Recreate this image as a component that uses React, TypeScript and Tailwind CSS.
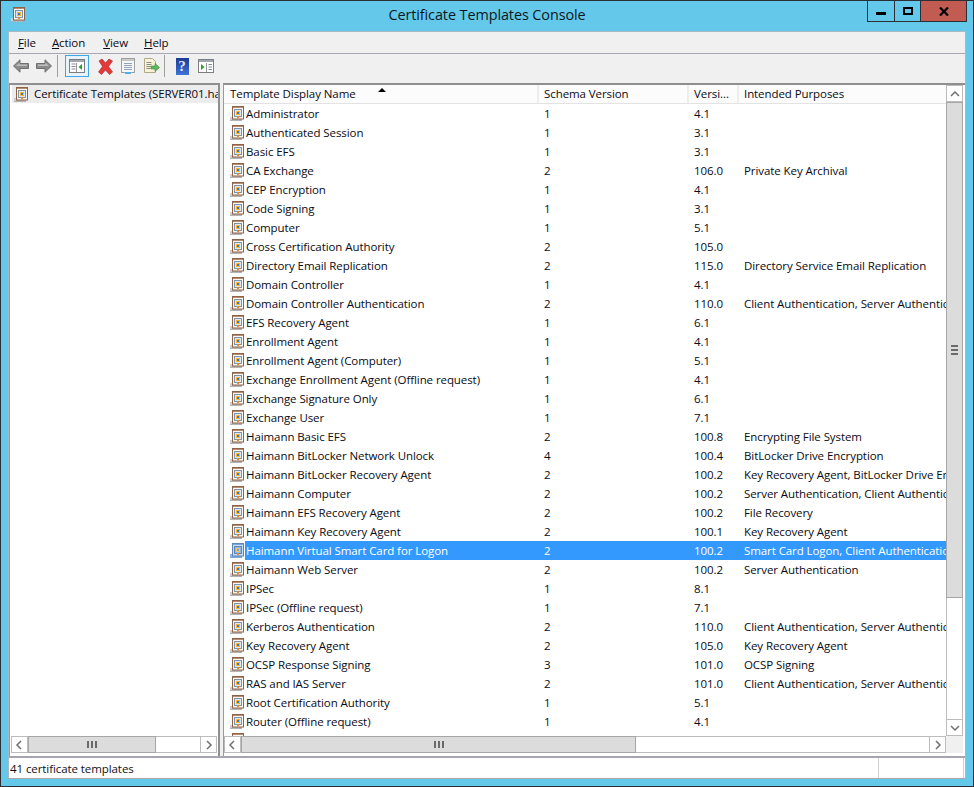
import React from "react";

const rows: [string, string, string, string][] = [
  ["Administrator", "1", "4.1", ""],
  ["Authenticated Session", "1", "3.1", ""],
  ["Basic EFS", "1", "3.1", ""],
  ["CA Exchange", "2", "106.0", "Private Key Archival"],
  ["CEP Encryption", "1", "4.1", ""],
  ["Code Signing", "1", "3.1", ""],
  ["Computer", "1", "5.1", ""],
  ["Cross Certification Authority", "2", "105.0", ""],
  ["Directory Email Replication", "2", "115.0", "Directory Service Email Replication"],
  ["Domain Controller", "1", "4.1", ""],
  ["Domain Controller Authentication", "2", "110.0", "Client Authentication, Server Authentication, Smart Card Logon"],
  ["EFS Recovery Agent", "1", "6.1", ""],
  ["Enrollment Agent", "1", "4.1", ""],
  ["Enrollment Agent (Computer)", "1", "5.1", ""],
  ["Exchange Enrollment Agent (Offline request)", "1", "4.1", ""],
  ["Exchange Signature Only", "1", "6.1", ""],
  ["Exchange User", "1", "7.1", ""],
  ["Haimann Basic EFS", "2", "100.8", "Encrypting File System"],
  ["Haimann BitLocker Network Unlock", "4", "100.4", "BitLocker Drive Encryption"],
  ["Haimann BitLocker Recovery Agent", "2", "100.2", "Key Recovery Agent, BitLocker Drive Encryption"],
  ["Haimann Computer", "2", "100.2", "Server Authentication, Client Authentication"],
  ["Haimann EFS Recovery Agent", "2", "100.2", "File Recovery"],
  ["Haimann Key Recovery Agent", "2", "100.1", "Key Recovery Agent"],
  ["Haimann Virtual Smart Card for Logon", "2", "100.2", "Smart Card Logon, Client Authentication"],
  ["Haimann Web Server", "2", "100.2", "Server Authentication"],
  ["IPSec", "1", "8.1", ""],
  ["IPSec (Offline request)", "1", "7.1", ""],
  ["Kerberos Authentication", "2", "110.0", "Client Authentication, Server Authentication"],
  ["Key Recovery Agent", "2", "105.0", "Key Recovery Agent"],
  ["OCSP Response Signing", "3", "101.0", "OCSP Signing"],
  ["RAS and IAS Server", "2", "101.0", "Client Authentication, Server Authentication"],
  ["Root Certification Authority", "1", "5.1", ""],
  ["Router (Offline request)", "1", "4.1", ""],
  ["Smartcard Logon", "1", "6.1", ""],
];

function CertIcon({ selected = false }: { selected?: boolean }) {
  const frame = selected ? "#5f86b8" : "#8f6248";
  const inner = selected ? "#c9def5" : "#fbfaf6";
  return (
    <svg width="15" height="15" viewBox="0 0 15 15" className="shrink-0">
      <path d="M0 13h12v2H0z" fill={selected ? "#7aa7dc" : "#b4b4b4"} />
      <path d="M0 11h2v3H0z" fill={selected ? "#8fb6e6" : "#cfcfcf"} />
      <rect x="2.5" y="0.5" width="11" height="12.5" fill={inner} stroke={frame} />
      <path d="M3 1h10v1H3z" fill={selected ? "#7aa7dc" : "#b88e72"} />
      <rect x="4.5" y="3.5" width="7" height="7" fill={selected ? "#8cb8ec" : "#dfe7f2"} stroke={selected ? "#5f86b8" : "#7f93ad"} />
      <rect x="6" y="5" width="4" height="4" fill={selected ? "#f2c46a" : "#f6b52e"} />
      <rect x="7" y="6" width="2" height="2" fill={selected ? "#7aa7dc" : "#3f78c8"} />
      <path d="M7 10h2v2.500l-1-0.700-1 0.700z" fill="#e0892a" />
    </svg>
  );
}

function Arrow({ dir, color = "#6f6f6f" }: { dir: "l" | "r" | "u" | "d"; color?: string }) {
  const d = { l: "M7 2 3 6l4 4", r: "M4 2l4 4-4 4", u: "M2 8l4-4 4 4", d: "M2 4l4 4 4-4" }[dir];
  return (
    <svg width="12" height="12" viewBox="0 0 12 12">
      <path d={d} fill="none" stroke={color} strokeWidth="1.5" />
    </svg>
  );
}

function ScrollBtn({ dir }: { dir: "l" | "r" | "u" | "d" }) {
  return (
    <div className="flex h-[17px] w-[17px] shrink-0 items-center justify-center border border-[#bcbcbc] bg-white">
      <Arrow dir={dir} />
    </div>
  );
}

function HBar({ thumb }: { thumb: string }) {
  return (
    <div className="flex h-[17px] w-full min-w-0">
      <ScrollBtn dir="l" />
      <div className="flex min-w-0 flex-1">
        <div className={`${thumb} flex shrink-0 items-center justify-center border border-[#a6a6a6] bg-[#dcdcdc]`}>
          <div className="flex gap-[2px]">
            <div className="h-[7px] w-[2px] bg-[#6b6b6b]" />
            <div className="h-[7px] w-[2px] bg-[#6b6b6b]" />
            <div className="h-[7px] w-[2px] bg-[#6b6b6b]" />
          </div>
        </div>
        <div className="flex-1 border-y border-[#bcbcbc] bg-white" />
      </div>
      <ScrollBtn dir="r" />
    </div>
  );
}

function ArrowBtn({ flip }: { flip?: boolean }) {
  return (
    <svg width="16" height="14" viewBox="0 0 16 14" className={flip ? "-scale-x-100" : ""}>
      <path d="M0.5 7 7 0.8v3.700h8.500v5H7v3.700z" fill="#8c8c8c" stroke="#6f6f6f" />
      <path d="M3 7l3.500-3.200V5.500H14V7z" fill="#bdbdbd" />
    </svg>
  );
}

function Toolbar() {
  return (
    <div className="flex h-[29px] items-start bg-[#f0f0f0] pl-[4px] pt-[1px]">
      <div className="flex h-[22px] w-[39px] items-center justify-between">
        <ArrowBtn />
        <ArrowBtn flip />
      </div>
      <div className="ml-[5px] h-[22px] w-px bg-[#a0a0a0]" />
      <div className="ml-[7px] flex h-[22px] w-[24px] items-center justify-center border border-[#3ea8e6] bg-[#e6f3fb]">
        <svg width="16" height="14" viewBox="0 0 16 14">
          <rect x="0.5" y="0.5" width="15" height="13" fill="#fff" stroke="#7d7d7d" />
          <rect x="1" y="1" width="14" height="2" fill="#9fa8b0" />
          <path d="M2.5 5h4M2.5 7.5h4M2.5 10h4" stroke="#7d8a96" />
          <path d="M7.5 4v9" stroke="#9a9a9a" />
          <path d="M13 5v6L9.5 8z" fill="#2ca02c" />
        </svg>
      </div>
      <div className="ml-[6px] flex h-[22px] w-[20px] items-center justify-center">
        <svg width="17" height="17" viewBox="0 0 17 17">
          <path d="M2 3 5 1l3.500 4L12 1l3.500 2-4 5.500 4 5.500-3 2.500-4-4.500-4 4.500-3-2.500 4-5.500z" fill="#e23a3a" stroke="#b02020" strokeWidth="0.6" />
        </svg>
      </div>
      <div className="ml-[3px] flex h-[22px] w-[20px] items-center justify-center">
        <svg width="16" height="16" viewBox="0 0 16 16">
          <rect x="1.500" y="0.500" width="13" height="14" fill="#f6f6f6" stroke="#a0a0a0" />
          <rect x="2" y="1" width="12" height="2" fill="#c8c8c8" />
          <path d="M4 5.500h8M4 7.500h8M4 9.500h8M4 11.500h8" stroke="#8fa3bd" />
          <rect x="5" y="14" width="6" height="2" fill="#4fb0e8" />
        </svg>
      </div>
      <div className="ml-[3px] flex h-[22px] w-[20px] items-center justify-center">
        <svg width="17" height="16" viewBox="0 0 17 16">
          <path d="M1.500 0.500h8l3 3v11h-11z" fill="#f8f2d8" stroke="#b0a888" />
          <path d="M3.500 4.500h5M3.500 6.500h5M3.500 8.500h4M3.500 10.500h4" stroke="#8a8a7a" />
          <path d="M8 8h4V5.500l4.500 4-4.500 4V11H8z" fill="#5cb85c" stroke="#3c8c3c" strokeWidth="0.6" />
        </svg>
      </div>
      <div className="ml-[3px] h-[22px] w-px bg-[#a0a0a0]" />
      <div className="ml-[10px] flex h-[22px] w-[14px] items-center justify-center">
        <div
          className="flex h-[17px] w-[13px] items-center justify-center bg-linear-to-b from-[#1d3a94] to-[#3f74d8] text-[15px] font-bold leading-none text-[#e8e8ff]"
          style={{ fontFamily: "'Liberation Serif', serif" }}
        >
          ?
        </div>
      </div>
      <div className="ml-[9px] flex h-[22px] w-[16px] items-center justify-center">
        <svg width="16" height="14" viewBox="0 0 16 14">
          <rect x="0.500" y="0.500" width="15" height="13" fill="#fff" stroke="#7d7d7d" />
          <rect x="1" y="1" width="14" height="2" fill="#9fa8b0" />
          <path d="M3 5v6l3.500-3z" fill="#2ca02c" />
          <path d="M8.500 4v9" stroke="#9a9a9a" />
          <path d="M10.500 5.500h3.500M10.500 8h3.500M10.500 10.500h3.500" stroke="#7d8a96" />
        </svg>
      </div>
    </div>
  );
}

const col2 = "w-[150px] shrink-0 pl-[5px]";
const col3 = "w-[50px] shrink-0 pl-[5px]";

export default function App() {
  return (
    <div
      className="flex h-[787px] w-[974px] flex-col overflow-hidden border border-[#2b2f33] bg-[#63c8ea] text-[11.5px] leading-none tracking-[-0.08px] text-[#0a0a14]"
      style={{ fontFamily: "'Open Sans', 'Noto Sans', sans-serif" }}
    >
      {/* Title bar */}
      <div className="relative flex h-[30px] shrink-0 items-center justify-center pb-[2px]">
        <div className="absolute left-[10px] top-[6px]">
          <CertIcon />
        </div>
        <span className="text-[14.4px] text-[#10181c]">Certificate Templates Console</span>
        <div className="absolute right-[6px] top-0 flex h-[21px] border-x border-b border-[#2b2f33]">
          <div className="flex w-[27px] items-center justify-center border-r border-[#2b2f33]">
            <div className="mt-[5px] h-[3px] w-[10px] bg-black" />
          </div>
          <div className="flex w-[26px] items-center justify-center border-r border-[#2b2f33]">
            <div className="h-[8px] w-[10px] border-2 border-black" />
          </div>
          <div className="flex w-[45px] items-center justify-center bg-[#c25b51]">
            <svg width="10" height="9" viewBox="0 0 10 9">
              <path d="M1 0.500l8 8M9 0.500l-8 8" stroke="#000" strokeWidth="2.200" />
            </svg>
          </div>
        </div>
      </div>

      {/* Client area */}
      <div className="mx-[7px] flex min-h-0 flex-1 flex-col border-x border-t border-[#a9b9c4] bg-[#f0f0f0]">
        {/* Menu */}
        <div className="flex h-[22px] shrink-0 items-center border-b border-[#a8a8b4] pl-[9px]">
          <span className="mr-[16px]"><u>F</u>ile</span>
          <span className="mr-[18px]"><u>A</u>ction</span>
          <span className="mr-[16px]"><u>V</u>iew</span>
          <span><u>H</u>elp</span>
        </div>
        <Toolbar />

        {/* Panes */}
        <div className="flex h-[673px] shrink-0 items-stretch">
          {/* Tree pane */}
          <div className="flex w-[211px] shrink-0 flex-col border-l border-r-2 border-t-2 border-[#8f8f8f] border-l-[#9a9a9a] bg-white">
            <div className="flex min-h-0 flex-1 flex-col pl-[2px]">
              <div className="flex h-[18px] items-center overflow-hidden whitespace-nowrap bg-[#ececec] pl-[2px]">
                <CertIcon />
                <span className="ml-[5px]">Certificate Templates (SERVER01.haimann.local)</span>
              </div>
            </div>
            <div className="mb-[3px] px-[1px]">
              <HBar thumb="w-[128px]" />
            </div>
          </div>
          <div className="w-[3px] shrink-0" />
          {/* List pane */}
          <div className="flex min-w-0 flex-1 border-l border-t-2 border-[#8f8f8f] border-l-[#9a9a9a] bg-white">
            <div className="flex min-w-0 flex-1 flex-col">
              <div className="flex min-h-0 flex-1 flex-col overflow-hidden">
                <div className="flex h-[19px] shrink-0 items-center border-b border-[#e3e3e3] bg-[#fcfcfc]">
                  <div className="relative flex h-full w-[315px] shrink-0 items-center border-r-2 border-[#ededed] pl-[6px]">
                    Template Display Name
                    <svg width="8" height="4" viewBox="0 0 8 4" className="absolute left-[154px] top-[3px]">
                      <path d="M0 4 4 0l4 4z" fill="#000" />
                    </svg>
                  </div>
                  <div className="flex h-full w-[150px] shrink-0 items-center border-r-2 border-[#ededed] pl-[5px]">Schema Version</div>
                  <div className="flex h-full w-[50px] shrink-0 items-center border-r-2 border-[#ededed] pl-[5px]">Versi...</div>
                  <div className="flex h-full flex-1 items-center pl-[5px]">Intended Purposes</div>
                </div>
                {rows.map(([name, schema, ver, purpose]) => {
                  const selected = name.startsWith("Haimann Virtual");
                  return (
                    <div key={name} className={`flex h-[19px] shrink-0 items-center whitespace-nowrap ${selected ? "text-white" : ""}`}>
                      <div className="flex h-full w-[315px] shrink-0 items-center pl-[6px]">
                        <CertIcon selected={selected} />
                        <span className={`flex h-full flex-1 items-center pl-[1px] ${selected ? "bg-[#3399ff]" : ""}`}>{name}</span>
                      </div>
                      <div className={`flex h-full items-center ${col2} ${selected ? "bg-[#3399ff]" : ""}`}>{schema}</div>
                      <div className={`flex h-full items-center ${col3} ${selected ? "bg-[#3399ff]" : ""}`}>{ver}</div>
                      <div className={`flex h-full min-w-0 flex-1 items-center overflow-hidden pl-[5px] ${selected ? "bg-[#3399ff]" : ""}`}>{purpose}</div>
                    </div>
                  );
                })}
              </div>
              <div className="mb-[3px] shrink-0">
                <HBar thumb="w-[395px]" />
              </div>
            </div>
            {/* Vertical scrollbar */}
            <div className="mr-[2px] flex w-[17px] shrink-0 flex-col">
              <ScrollBtn dir="u" />
              <div className="flex h-[496px] shrink-0 items-center justify-center border border-[#a6a6a6] bg-[#dcdcdc]">
                <div className="flex flex-col gap-[2px]">
                  <div className="h-[2px] w-[7px] bg-[#6b6b6b]" />
                  <div className="h-[2px] w-[7px] bg-[#6b6b6b]" />
                  <div className="h-[2px] w-[7px] bg-[#6b6b6b]" />
                </div>
              </div>
              <div className="flex-1 border-x border-[#bcbcbc]" />
              <ScrollBtn dir="d" />
              <div className="h-[17px] shrink-0 bg-[#f0f0f0]" />
              <div className="h-[3px] shrink-0 bg-white" />
            </div>
          </div>
        </div>

        {/* Status bar */}
        <div className="flex min-h-0 flex-1 border-t-2 border-[#a5a5ad] bg-white">
          <div className="flex w-[870px] shrink-0 items-center border-r border-[#d0d0d0] pl-[1px] pt-[1px] text-[#10101a]">41 certificate templates</div>
          <div className="flex-1 border-r border-[#d0d0d0]" />
          <div className="w-[1px] shrink-0" />
        </div>
      </div>
      <div className="mx-[7px] h-[1px] shrink-0 bg-[#a9a9a9]" />
      <div className="h-[7px] shrink-0" />
    </div>
  );
}
